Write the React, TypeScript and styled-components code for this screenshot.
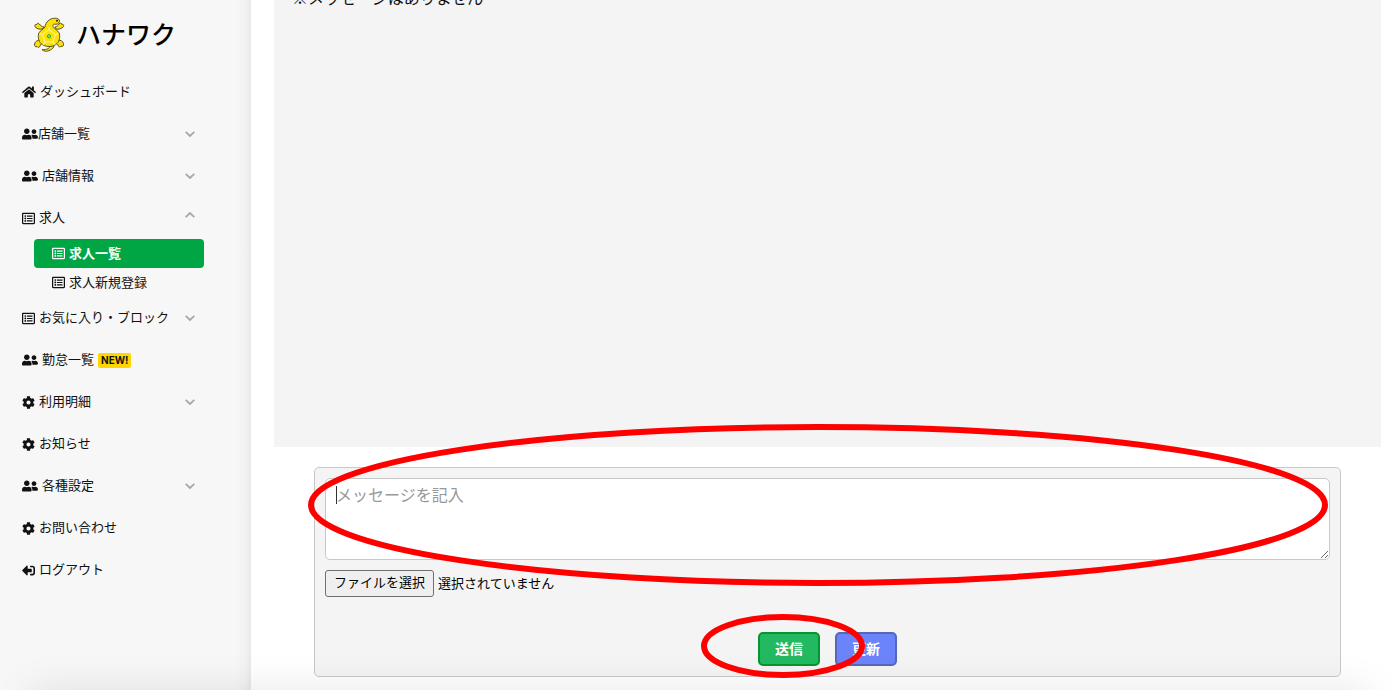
import React from "react";
import styled, { createGlobalStyle, css } from "styled-components";
import { FaHome, FaUserFriends, FaRegListAlt, FaCog, FaSignOutAlt } from "react-icons/fa";

const GlobalStyle = createGlobalStyle`
  *, *::before, *::after { box-sizing: border-box; }
  body {
    margin: 0;
    background: #fff;
    color: #111;
    font-family: "Noto Sans CJK JP", sans-serif;
    font-size: 13px;
    line-height: 18px;
  }
  #root { overflow: hidden; }
`;

const Page = styled.div`
  display: flex;
  min-height: 100vh;
`;

const Sidebar = styled.aside`
  flex: 0 0 251px;
  background: linear-gradient(to left, #e9e9e9 0, #f1f1f1 5px, #f7f7f7 14px);
`;

const Brand = styled.a`
  display: flex;
  align-items: center;
  gap: 10px;
  height: 71px;
  padding: 0 0 2px 33px;
  color: #000;
  text-decoration: none;
`;

const BrandName = styled.span`
  padding-bottom: 4px;
  font-size: 25px;
  font-weight: 500;
  line-height: 36px;
`;

const Menu = styled.ul`
  margin: 0;
  padding: 0;
  list-style: none;
`;

const SubMenu = styled(Menu)`
  padding: 0 47px 0 34px;
`;

const MenuLink = styled.a<{ $tight?: boolean }>`
  display: flex;
  align-items: center;
  gap: ${(p) => (p.$tight ? 0 : 4)}px;
  height: 42px;
  padding: 0 56px 0 22px;
  color: #111;
  text-decoration: none;
`;

const SubLink = styled.a<{ $active?: boolean }>`
  display: flex;
  align-items: center;
  gap: 4px;
  height: 29px;
  padding-left: 18px;
  border-radius: 4px;
  color: #111;
  text-decoration: none;
  ${(p) =>
    p.$active &&
    css`
      background: #00a644;
      color: #fff;
      font-weight: 700;
    `}
`;

const Label = styled.span`
  padding-bottom: 2px;
`;

const IconBox = styled.span<{ $flip?: boolean }>`
  display: flex;
  flex: none;
  ${(p) => p.$flip && "transform: scaleX(-1);"}
`;

const Arrow = styled.svg<{ $open?: boolean }>`
  width: 10px;
  height: 6px;
  margin-left: auto;
  ${(p) => p.$open && "transform: rotate(180deg); margin-bottom: 6px;"}
`;

const Badge = styled.span`
  padding: 0 3px;
  border-radius: 2px;
  background: #ffd600;
  font: 700 10px/15px Inter, sans-serif;
`;

const Main = styled.main`
  flex: 1;
  min-width: 0;
  padding: 0 17px 13px 23px;
`;

/* The thread is scrolled so that its first line is partly above the window. */
const Thread = styled.section`
  height: 467px;
  margin-top: -20px;
  padding: 5px 18px;
  background: #f4f4f4;
  font-size: 16px;
  line-height: 24px;
`;

const ThreadText = styled.p`
  margin: 0;
`;

const Composer = styled.form`
  margin: 20px 40px 0;
  padding: 10px;
  border: 1px solid #c8c8c8;
  border-radius: 5px;
  background: #f4f4f4;
`;

const RingBox = styled.div`
  position: absolute;
  z-index: 2;
  pointer-events: none;
  svg {
    display: block;
    width: 100%;
    height: 100%;
  }
  ellipse {
    rx: calc(50% - 3px);
    ry: calc(50% - 3px);
    fill: none;
    stroke: #f00;
    stroke-width: 6px;
  }
`;

const MessageRing = styled(RingBox)`
  inset: -54px 2px -26px -17px;
`;

const SendRing = styled(RingBox)`
  inset: -18px -45px -12px -57px;
`;

const MessageField = styled.div`
  position: relative;
  display: flex;
`;

const MessageBox = styled.textarea`
  width: 100%;
  height: 82px;
  padding: 3px 10px;
  border: 1px solid #c8c8c8;
  border-radius: 5px;
  outline: none;
  background: #fff;
  font: inherit;
  font-size: 16px;
  line-height: 24px;
  resize: vertical;
  &::placeholder { color: #999; opacity: 1; }
`;

const Caret = styled.span`
  position: absolute;
  top: 8px;
  left: 11px;
  width: 1px;
  height: 18px;
  background: #333;
`;

const FileRow = styled.div`
  display: flex;
  align-items: center;
  gap: 4px;
  margin-top: 10px;
  color: #000;
`;

const FileInput = styled.input`
  position: absolute;
  width: 1px;
  height: 1px;
  opacity: 0;
`;

const FileButton = styled.label`
  padding: 2px 8px 5px;
  border: 1px solid #707070;
  border-radius: 3px;
  background: #efefef;
  line-height: 18px;
`;

const Actions = styled.div`
  display: flex;
  justify-content: center;
  gap: 15px;
  margin-top: 35px;
`;

const SendSlot = styled.div`
  position: relative;
`;

const ActionButton = styled.button<{ $tone: "green" | "blue" }>`
  display: block;
  width: 62px;
  height: 34px;
  padding: 0 0 2px;
  border: 2px solid ${(p) => (p.$tone === "green" ? "#05962f" : "#5667b9")};
  border-radius: 5px;
  background: ${(p) => (p.$tone === "green" ? "#22b961" : "#6b84fb")};
  color: #fff;
  font: inherit;
  font-size: 14px;
  font-weight: 700;
`;

const BottomShade = styled.div`
  position: fixed;
  z-index: 1;
  right: 30px;
  bottom: -60px;
  left: 30px;
  height: 60px;
  box-shadow: 0 0 40px rgba(0, 0, 0, 0.1);
  pointer-events: none;
`;

const Turtle = () => (
  <svg width="33" height="36" viewBox="0 0 33 36" aria-hidden="true">
    <g fill="#fbe106" stroke="#5c5320" strokeWidth="1" strokeLinejoin="round">
      <path d="M17 29c0 2-3 4-8 3.6 2 2 5 2 7 1 3-1 5-3 5-5z" />
      <path d="M9 12C7 12.500 3 12 2 9.500 1.500 8 2.500 7 3.800 7.500 4 6 5.500 5.800 6.300 7c1 1.500 2.700 2.500 4.700 3zM23 12c2 .5 6 0 7.500-2.500.7-1.500-.5-2.700-1.700-2 .1-1.500-1.800-2-2.600-.7-.9 1.500-2.200 2.700-4.200 3.200zM7.500 23c-3 0-5.500 1.500-6 4-.3 2 1 3.500 2.700 2.600C5 31 6.500 30.500 7 29c.5-1.700 2-3 4-3.500zM24.500 23c3 0 5.500 1 6 3.500.4 2-.8 3.600-2.500 2.700-.8 1.400-2.300.9-2.800-.6-.5-1.700-2.200-2.600-4.200-3.100z" />
      <path d="M6 15.500 12 10c.5-5 4.500-8.500 9.500-8.800 3-.2 5.300 1 5 3.200C26.200 6.500 23.500 8 21 7c-1 .7-1.300 1.600-1.200 2.500L26 15.500c1.500 4 .5 8.500-2 11-4 4-12 4-16 0-2.500-2.500-3.500-7-2-11z" />
    </g>
    <circle cx="24" cy="3.800" r="1" fill="#222" />
    <path
      d="M16 12.500l6.500 5-2.500 7.500h-8l-2.500-7.500zM16 12.500V10M22.500 17.500l3-1M20 25l2 3M12 25l-2 3M9.500 17.500l-3-1"
      fill="none"
      stroke="#fffbd0"
      strokeWidth=".8"
    />
    <path d="M16 17.300l1.800 1.500-.8 2h-2l-.8-2z" fill="#7fe060" stroke="#13a83c" strokeWidth=".9" />
  </svg>
);

const Chevron = ({ open }: { open?: boolean }) => (
  <Arrow $open={open} viewBox="0 0 10 6" aria-hidden="true">
    <path d="M.7.800 5 5 9.300.800" fill="none" stroke="#a8a8a8" strokeWidth="1.800" />
  </Arrow>
);

const Ellipse = () => (
  <svg aria-hidden="true">
    <ellipse cx="50%" cy="50%" />
  </svg>
);

const icons = {
  home: <FaHome size={14} />,
  users: <FaUserFriends size={16} />,
  list: <FaRegListAlt size={13} />,
  cog: <FaCog size={13} />,
  exit: <FaSignOutAlt size={13} />,
};

type Item = {
  icon: keyof typeof icons;
  label: string;
  arrow?: "up" | "down";
  tight?: boolean;
  badge?: string;
  children?: { label: string; active?: boolean }[];
};

const items: Item[] = [
  { icon: "home", label: "ダッシュボード" },
  { icon: "users", label: "店舗一覧", arrow: "down", tight: true },
  { icon: "users", label: "店舗情報", arrow: "down" },
  {
    icon: "list",
    label: "求人",
    arrow: "up",
    children: [{ label: "求人一覧", active: true }, { label: "求人新規登録" }],
  },
  { icon: "list", label: "お気に入り・ブロック", arrow: "down" },
  { icon: "users", label: "勤怠一覧", badge: "NEW!" },
  { icon: "cog", label: "利用明細", arrow: "down" },
  { icon: "cog", label: "お知らせ" },
  { icon: "users", label: "各種設定", arrow: "down" },
  { icon: "cog", label: "お問い合わせ" },
  { icon: "exit", label: "ログアウト" },
];

const SideItem = ({ item }: { item: Item }) => (
  <li>
    <MenuLink href="#" $tight={item.tight}>
      <IconBox $flip={item.icon === "exit"}>{icons[item.icon]}</IconBox>
      <Label>{item.label}</Label>
      {item.badge && <Badge>{item.badge}</Badge>}
      {item.arrow && <Chevron open={item.arrow === "up"} />}
    </MenuLink>
    {item.children && (
      <SubMenu>
        {item.children.map((child) => (
          <li key={child.label}>
            <SubLink href="#" $active={child.active}>
              <IconBox>{icons.list}</IconBox>
              <Label>{child.label}</Label>
            </SubLink>
          </li>
        ))}
      </SubMenu>
    )}
  </li>
);

export default function App() {
  return (
    <>
      <GlobalStyle />
      <Page>
        <Sidebar>
          <Brand href="#">
            <Turtle />
            <BrandName>ハナワク</BrandName>
          </Brand>
          <nav>
            <Menu>
              {items.map((item) => (
                <SideItem key={item.label} item={item} />
              ))}
            </Menu>
          </nav>
        </Sidebar>
        <Main>
          <Thread>
            <ThreadText>※メッセージはありません</ThreadText>
          </Thread>
          <Composer onSubmit={(e) => e.preventDefault()}>
            <MessageField>
              <MessageBox aria-label="メッセージ" placeholder="メッセージを記入" />
              <Caret />
              <MessageRing>
                <Ellipse />
              </MessageRing>
            </MessageField>
            <FileRow>
              <FileInput id="attachment" type="file" />
              <FileButton htmlFor="attachment">ファイルを選択</FileButton>
              <Label>選択されていません</Label>
            </FileRow>
            <Actions>
              <SendSlot>
                <ActionButton type="submit" $tone="green">送信</ActionButton>
                <SendRing>
                  <Ellipse />
                </SendRing>
              </SendSlot>
              <ActionButton type="button" $tone="blue">更新</ActionButton>
            </Actions>
          </Composer>
        </Main>
      </Page>
      <BottomShade />
    </>
  );
}
